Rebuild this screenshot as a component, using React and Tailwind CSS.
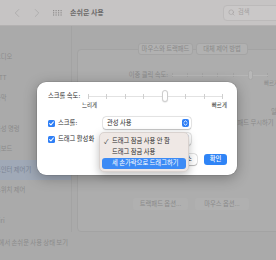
import React from 'react';
import { ChevronLeft, ChevronRight, Search } from 'lucide-react';

const Check = () => (
  <span className="flex h-[7px] w-[7px] shrink-0 items-center justify-center rounded-[1.5px] bg-[#2f7ff6]">
    <svg viewBox="0 0 7 7" className="h-[7px] w-[7px]">
      <path d="M1.6 3.6 L2.9 4.9 L5.4 2" stroke="white" strokeWidth="1.1" fill="none" strokeLinecap="round" strokeLinejoin="round" />
    </svg>
  </span>
);

const Stepper = () => (
  <span className="flex h-[8px] w-[7px] items-center justify-center rounded-[2px] bg-[#2f7ff6]">
    <svg viewBox="0 0 7 8" className="h-[8px] w-[7px]">
      <path d="M2 3.2 L3.5 1.8 L5 3.2 M2 4.8 L3.5 6.2 L5 4.8" stroke="white" strokeWidth="0.9" fill="none" strokeLinecap="round" strokeLinejoin="round" />
    </svg>
  </span>
);

const GridDots = () => (
  <svg viewBox="0 0 9 6" className="ml-[9px] h-[6px] w-[9px]">
    {[0, 1, 2].map((r) =>
      [0, 1, 2, 3].map((c) => <rect key={`${r}-${c}`} x={c * 2.5} y={r * 2.2} width="1.2" height="1.2" fill="#8f8d8d" />)
    )}
  </svg>
);

const Popup = ({ label }) => (
  <div className="flex h-[12px] w-[88px] items-center justify-between rounded-[3px] bg-white pl-[4px] pr-[2px] shadow-[0_0_0_0.5px_rgba(0,0,0,0.15),0_0.5px_1.5px_rgba(0,0,0,0.2)]">
    <span>{label}</span>
    <Stepper />
  </div>
);

const sidebarGroups = [
  ['오디오', 'RTT', '자막'],
  ['음성 명령', '키보드', '포인터 제어기', '스위치 제어'],
  ['Siri'],
];

export default function App() {
  return (
    <div className="relative h-[260px] w-[276px] overflow-hidden bg-[#aaaaaa] font-['Noto_Sans_CJK_KR','Noto_Sans',sans-serif] text-[6.3px] leading-none text-[#8a8a8a]">
      {/* title bar */}
      <div className="flex h-[26px] items-center border-b border-[#b3b1b1] bg-[#c6c4c4] pl-[10px]">
        <ChevronLeft size={14} strokeWidth={1.5} className="text-[#acaaaa]" />
        <ChevronRight size={14} strokeWidth={1.5} className="ml-[6px] text-[#acaaaa]" />
        <GridDots />
        <span className="ml-[8px] text-[7px] font-semibold text-[#6d6b6b]">손쉬운 사용</span>
        <div className="ml-auto mr-[-8px] flex h-[16px] w-[61px] items-center gap-[3px] rounded-[4px] border border-[#bcbaba] bg-[#cac8c8] pl-[4px] text-[#a3a1a1]">
          <Search size={7} strokeWidth={2} className="text-[#a3a1a1]" />
          <span>검색</span>
        </div>
      </div>

      <div className="flex h-[206px]">
        {/* sidebar */}
        <div className="w-[72px] shrink-0 border-r border-[#a3a3a3] pt-[21px]">
          {sidebarGroups.map((group, gi) => (
            <div key={gi} className={gi > 0 ? 'mt-[10px]' : ''}>
              {group.map((item) => (
                <div
                  key={item}
                  className={`flex h-[20.5px] items-center ${item === '포인터 제어기' ? 'bg-[#a0a9b7] text-[#7b8494]' : ''}`}
                >
                  <span className="ml-[-5px] whitespace-nowrap">{item}</span>
                </div>
              ))}
            </div>
          ))}
        </div>

        {/* main */}
        <div className="flex flex-1 flex-col">
          <div className="relative z-10 mt-[17px] flex h-[12px] pl-[66px]">
            <div className="flex h-full w-[55px] items-center justify-center rounded-[3px] border border-[#a4a4a4] bg-[#b1b1b1]">마우스와 트랙패드</div>
            <div className="ml-[3px] flex h-full w-[52px] items-center justify-center rounded-[3px] border border-[#a4a4a4] bg-[#b1b1b1]">대체 제어 방법</div>
          </div>
          <div className="-mt-[6px] ml-[5px] mr-[-6px] flex h-[183px] flex-col rounded-[4px] border border-[#a3a3a3] bg-[#adadad]">
            <div className="mt-[20px] flex h-[10px] items-center">
              <span className="w-[90px] text-right">이중 클릭 속도:</span>
              <div className="relative ml-[4px] flex h-[10px] w-[96px] items-center justify-between">
                <div className="absolute inset-x-0 top-[4.5px] h-px bg-[#b6b6b6]" />
                {[0, 1, 2, 3, 4].map((i) => (
                  <span key={i} className="h-[4px] w-px bg-[#a2a2a2]" />
                ))}
                <span className="relative h-[10px] w-[5px] rounded-full border border-[#a8a8a8] bg-[#b8b8b8]" />
                <span className="h-[4px] w-px bg-[#a2a2a2]" />
              </div>
            </div>
            <div className="flex h-[8px] items-center pl-[186px] text-[5.5px]">
              <span className="whitespace-nowrap">빠르게</span>
            </div>
            <div className="mt-[20px] flex h-[8px] items-center pl-[193px]">
              <span className="whitespace-nowrap">일반</span>
            </div>
            <div className="mt-[3px] flex h-[8px] items-center justify-end pr-[9px]">
              <span className="whitespace-nowrap">내장 트랙패드 무시하기</span>
            </div>
            <div className="mt-[71px] flex h-[12px] pl-[55px]">
              <div className="flex h-full w-[55px] items-center justify-center rounded-[3px] bg-[#b0b0b0]">트랙패드 옵션...</div>
              <div className="ml-[7px] flex h-full w-[54px] items-center justify-center rounded-[3px] bg-[#b0b0b0]">마우스 옵션...</div>
            </div>
          </div>
        </div>
      </div>

      <div className="flex h-[28px] pt-[8px]">
        <span className="ml-[-26px] whitespace-nowrap">메뉴 막대에서 손쉬운 사용 상태 보기</span>
      </div>

      {/* sheet */}
      <div className="absolute left-[37px] top-[82px] h-[93px] w-[200px] rounded-[9px] bg-white pt-[8px] text-[#2b2b2b] shadow-[0_3px_14px_rgba(0,0,0,0.3),0_0_0_0.5px_rgba(0,0,0,0.15)]">
        <div className="flex h-[12px] items-center pl-[11px]">
          <span className="w-[40px] whitespace-nowrap">스크롤 속도:</span>
          <div className="relative flex h-[12px] w-[135px] items-center justify-between">
            <div className="absolute inset-x-0 top-[5.5px] h-px bg-[#e2e2e2]" />
            {[0, 1, 2, 3].map((i) => (
              <span key={i} className="relative h-[5px] w-px bg-[#cfcfcf]" />
            ))}
            <span className="relative h-[12px] w-[6px] rounded-full border border-[#cdcdcd] bg-white shadow-[0_0.5px_1px_rgba(0,0,0,0.15)]" />
            {[5, 6, 7].map((i) => (
              <span key={i} className="relative h-[5px] w-px bg-[#cfcfcf]" />
            ))}
          </div>
        </div>
        <div className="ml-[45px] flex h-[8px] w-[145px] items-center justify-between text-[5.5px]">
          <span>느리게</span>
          <span>빠르게</span>
        </div>
        <div className="mt-[7px] flex h-[12px] items-center pl-[11px]">
          <Check />
          <span className="ml-[3px] w-[45px]">스크롤:</span>
          <Popup label="관성 사용" />
        </div>
        <div className="mt-[4px] flex h-[12px] items-center pl-[11px]">
          <Check />
          <span className="ml-[3px] w-[45px] whitespace-nowrap">드래그 활성화</span>
          <Popup label="" />
        </div>
        <div className="mt-[9px] flex h-[11px] justify-end gap-[7px] pr-[10px]">
          <div className="flex w-[22px] items-center justify-center rounded-[3px] bg-white shadow-[0_0_0_0.5px_rgba(0,0,0,0.2),0_0.5px_1px_rgba(0,0,0,0.2)]">취소</div>
          <div className="flex w-[23px] items-center justify-center rounded-[3px] bg-[#2f84f6] font-medium text-white">확인</div>
        </div>

        {/* open menu */}
        <div className="absolute left-[62px] top-[50px] h-[40px] w-[90px] rounded-[5px] border border-[#d9d2cf] bg-[#efe8e5] px-[2px] pt-[3px] shadow-[0_3px_8px_rgba(0,0,0,0.25)]">
          <div className="flex h-[11px] items-center rounded-[3px] pl-[2px]">
            <span className="w-[8px] text-[6.5px]">✓</span>
            <span className="whitespace-nowrap">드래그 잠금 사용 안 함</span>
          </div>
          <div className="flex h-[11px] items-center rounded-[3px] pl-[10px]">
            <span className="whitespace-nowrap">드래그 잠금 사용</span>
          </div>
          <div className="flex h-[11px] items-center rounded-[3px] bg-[#3d8bf5] pl-[10px] text-white">
            <span className="whitespace-nowrap">세 손가락으로 드래그하기</span>
          </div>
        </div>
      </div>
    </div>
  );
}
